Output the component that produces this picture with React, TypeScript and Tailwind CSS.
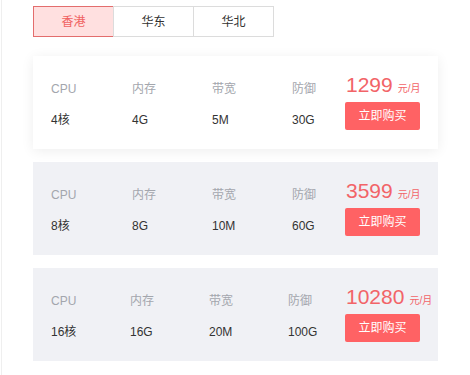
import { useState } from "react";

// 套餐数据
const plans = [
  { cpu: "4核", mem: "4G", bw: "5M", def: "30G", price: "1299", cols: ["w-[81px]", "w-[80px]", "w-[80px]", "w-[53px]"], active: true },
  { cpu: "8核", mem: "8G", bw: "10M", def: "60G", price: "3599", cols: ["w-[81px]", "w-[80px]", "w-[80px]", "w-[53px]"], active: false },
  { cpu: "16核", mem: "16G", bw: "20M", def: "100G", price: "10280", cols: ["w-[79px]", "w-[79px]", "w-[79px]", "w-[57px]"], active: false },
];

const regions = ["香港", "华东", "华北"];

export default function App() {
  const [region, setRegion] = useState(0);

  return (
    <div
      className="ml-[1px] h-[375px] border-l border-[#efefef] bg-white pl-[31px] pt-[6px]"
      style={{ fontFamily: '"Liberation Sans", "Noto Sans CJK SC", sans-serif' }}
    >
      {/* 地区切换 */}
      <div className="flex">
        {regions.map((r, i) => (
          <button
            key={r}
            onClick={() => setRegion(i)}
            className={`h-[31px] w-[81px] border text-[12px] ${
              i === region
                ? "border-[#e36d6d] bg-[#ffe0e0] text-[#f06262]"
                : "border-[#dcdcdc] bg-white text-[#333]"
            } ${i > 0 ? "-ml-px" : ""}`}
          >
            {r}
          </button>
        ))}
      </div>

      {/* 套餐列表 */}
      <div className="mt-[19px] flex w-[405px] flex-col gap-[13px]">
        {plans.map((p) => (
          <div
            key={p.price}
            className={`flex h-[93px] items-start pl-[18px] ${
              p.active ? "bg-white shadow-[0_2px_12px_rgba(0,0,0,0.07)]" : "bg-[#f0f1f5]"
            }`}
          >
            <div className="mt-[25px] flex">
              {[
                ["CPU", p.cpu],
                ["内存", p.mem],
                ["带宽", p.bw],
                ["防御", p.def],
              ].map(([label, val], i) => (
                <div key={label} className={`${p.cols[i]} flex flex-col gap-[15px]`}>
                  <span className="text-[12px] leading-4 text-[#a3a6ad]">{label}</span>
                  <span className="text-[12px] leading-4 text-[#333]">{val}</span>
                </div>
              ))}
            </div>
            <div className="mt-[17px] flex flex-col">
              <div className="flex h-6 items-baseline overflow-visible pl-px text-[#f26468]">
                <span className="text-[21px] leading-6">{p.price}</span>
                <span className="ml-[5px] text-[10px] leading-none">元/月</span>
              </div>
              <button className="mt-[5px] h-[28px] w-[75px] rounded-[2px] bg-[#ff6264] text-[12px] text-white">
                立即购买
              </button>
            </div>
          </div>
        ))}
      </div>
    </div>
  );
}
